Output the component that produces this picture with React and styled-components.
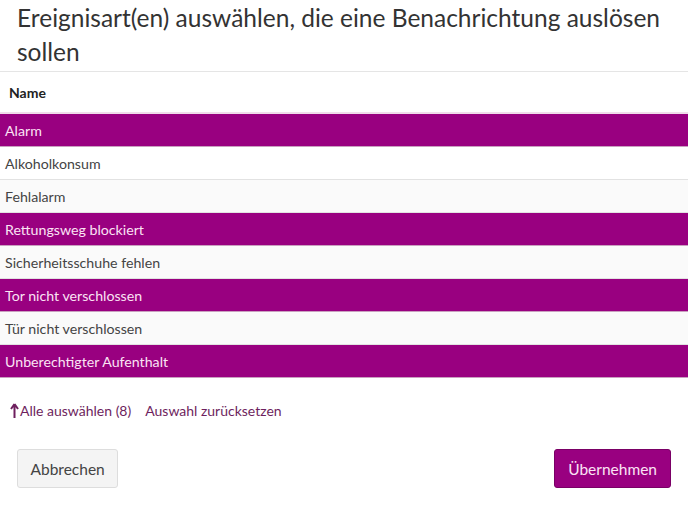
import React from 'react'
import styled, { createGlobalStyle } from 'styled-components'

const Global = createGlobalStyle`
  html, body { margin: 0; padding: 0; background: #fff; }
  body { font-family: Lato, "Noto Sans", sans-serif; color: #333; }
`

const Page = styled.div`
  width: 688px;
  display: flex;
  flex-direction: column;
`
const Title = styled.h2`
  margin: 0;
  padding: 1px 17px 2px 17px;
  font-weight: 400;
  font-size: 24.5px;
  line-height: 34px;
  color: #333;
`
const Table = styled.div`
  display: flex;
  flex-direction: column;
  border-top: 1px solid #e5e5e5;
`
const HeadRow = styled.div`
  height: 40px;
  display: flex;
  align-items: center;
  padding-left: 9px;
  font-weight: 700;
  font-size: 14px;
  color: #222;
  border-bottom: 2px solid #f0dcea;
`
const Row = styled.div`
  height: 32px;
  display: flex;
  align-items: center;
  padding-left: 5px;
  font-size: 14.2px;
  border-bottom: 1px solid ${p => (p.$selected ? '#c9a0bf' : '#e2e2e2')};
  background: ${p => (p.$selected ? '#990080' : p.$odd ? '#fafafa' : '#fff')};
  color: ${p => (p.$selected ? '#fbe3f4' : '#444')};
`
const Links = styled.div`
  display: flex;
  align-items: center;
  gap: 14px;
  padding: 24px 0 0 10px;
  font-size: 14px;
  color: #6e1f5e;
`
const Link = styled.span`
  display: flex;
  align-items: center;
  gap: 1px;
`
const Footer = styled.div`
  display: flex;
  justify-content: space-between;
  padding: 30px 17px 0 17px;
`
const Button = styled.button`
  height: 39px;
  padding: 0 ${p => (p.$primary ? '13px' : '12.5px')};
  border-radius: 3px;
  font-family: inherit;
  font-size: 15.5px;
  border: 1px solid ${p => (p.$primary ? '#7a0066' : '#ddd')};
  background: ${p => (p.$primary ? '#990080' : '#f4f4f4')};
  color: ${p => (p.$primary ? '#fbe3f4' : '#444')};
`

const items = [
  ['Alarm', true],
  ['Alkoholkonsum', false],
  ['Fehlalarm', false],
  ['Rettungsweg blockiert', true],
  ['Sicherheitsschuhe fehlen', false],
  ['Tor nicht verschlossen', true],
  ['Tür nicht verschlossen', false],
  ['Unberechtigter Aufenthalt', true],
]

const ArrowUp = () => (
  <svg width="9" height="16" viewBox="0 0 9 16">
    <path d="M4.5 1 L1 6 M4.5 1 L8 6 M4.5 1 V15" stroke="#6e1f5e" strokeWidth="2" fill="none" />
  </svg>
)

export default function App() {
  return (
    <Page>
      <Global />
      <Title>Ereignisart(en) auswählen, die eine Benachrichtung auslösen sollen</Title>
      <Table>
        <HeadRow>Name</HeadRow>
        {items.map(([name, sel], i) => (
          <Row key={name} $selected={sel} $odd={i % 2 === 0}>{name}</Row>
        ))}
      </Table>
      <Links>
        <Link><ArrowUp />Alle auswählen (8)</Link>
        <Link>Auswahl zurücksetzen</Link>
      </Links>
      <Footer>
        <Button>Abbrechen</Button>
        <Button $primary>Übernehmen</Button>
      </Footer>
    </Page>
  )
}
